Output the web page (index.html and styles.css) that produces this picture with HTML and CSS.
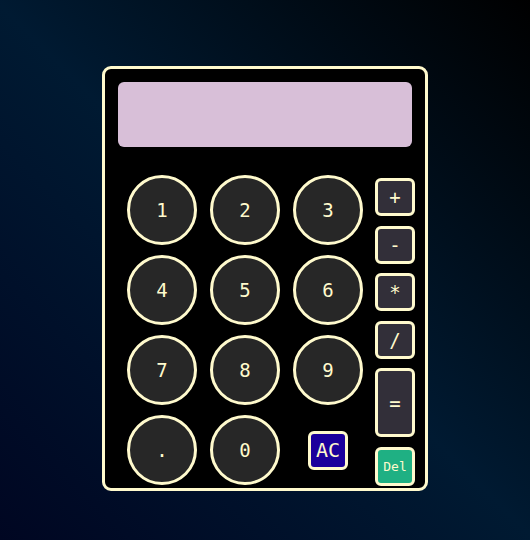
FILE: index.html
```html
<!DOCTYPE html>
<html lang="en">
<head>
<meta charset="utf-8">
<title>Calculator</title>
<link rel="stylesheet" href="styles.css">
</head>
<body>
  <div class="calc">
    <div class="display"></div>
    <div class="keypad">
      <div class="digits">
        <button class="key">1</button>
        <button class="key">2</button>
        <button class="key">3</button>
        <button class="key">4</button>
        <button class="key">5</button>
        <button class="key">6</button>
        <button class="key">7</button>
        <button class="key">8</button>
        <button class="key">9</button>
        <button class="key">.</button>
        <button class="key">0</button>
        <div class="cell"><button class="ac">AC</button></div>
      </div>
      <div class="ops">
        <button class="op">+</button>
        <button class="op">-</button>
        <button class="op">*</button>
        <button class="op">/</button>
        <button class="op eq">=</button>
        <button class="op del">Del</button>
      </div>
    </div>
  </div>
</body>
</html>
```
FILE: styles.css
```css
html, body {
  margin: 0;
  height: 100%;
}
body {
  background: linear-gradient(225deg, #000000 0%, #001a32 50%, #000622 100%);
  display: flex;
  justify-content: center;
  align-items: flex-start;
  padding-top: 66px;
  box-sizing: border-box;
  font-family: "DejaVu Sans Mono", monospace;
}
.calc {
  width: 326px;
  height: 425px;
  box-sizing: border-box;
  border: 3px solid #fffacd;
  border-radius: 9px;
  background: #000;
  padding: 13px 10px 0 13px;
}
.display {
  width: 294px;
  height: 65px;
  background: #d8bfd8;
  border-radius: 6px;
}
.keypad {
  display: flex;
  margin-top: 28px;
  padding-left: 9px;
}
.digits {
  display: grid;
  grid-template-columns: repeat(3, 70px);
  grid-auto-rows: 70px;
  column-gap: 13px;
  row-gap: 10px;
}
button {
  font-family: "DejaVu Sans Mono", monospace;
  color: #fffacd;
  padding: 0;
  cursor: pointer;
}
.key {
  width: 70px;
  height: 70px;
  border-radius: 50%;
  border: 3px solid #fffacd;
  background: #272727;
  font-size: 19px;
}
.cell {
  display: flex;
  align-items: center;
  justify-content: center;
}
.ac {
  width: 40px;
  height: 39px;
  border: 3px solid #fffacd;
  border-radius: 6px;
  background: #1b009c;
  font-size: 20px;
}
.ops {
  display: flex;
  flex-direction: column;
  gap: 9.6px;
  margin-left: 12px;
  margin-top: 3px;
}
.op {
  width: 40px;
  height: 38px;
  border: 3px solid #fffacd;
  border-radius: 6px;
  background: #322f39;
  font-size: 19px;
}
.op.eq {
  height: 69px;
}
.op.del {
  height: 39px;
  background: #1fb083;
  font-size: 13px;
}
```
